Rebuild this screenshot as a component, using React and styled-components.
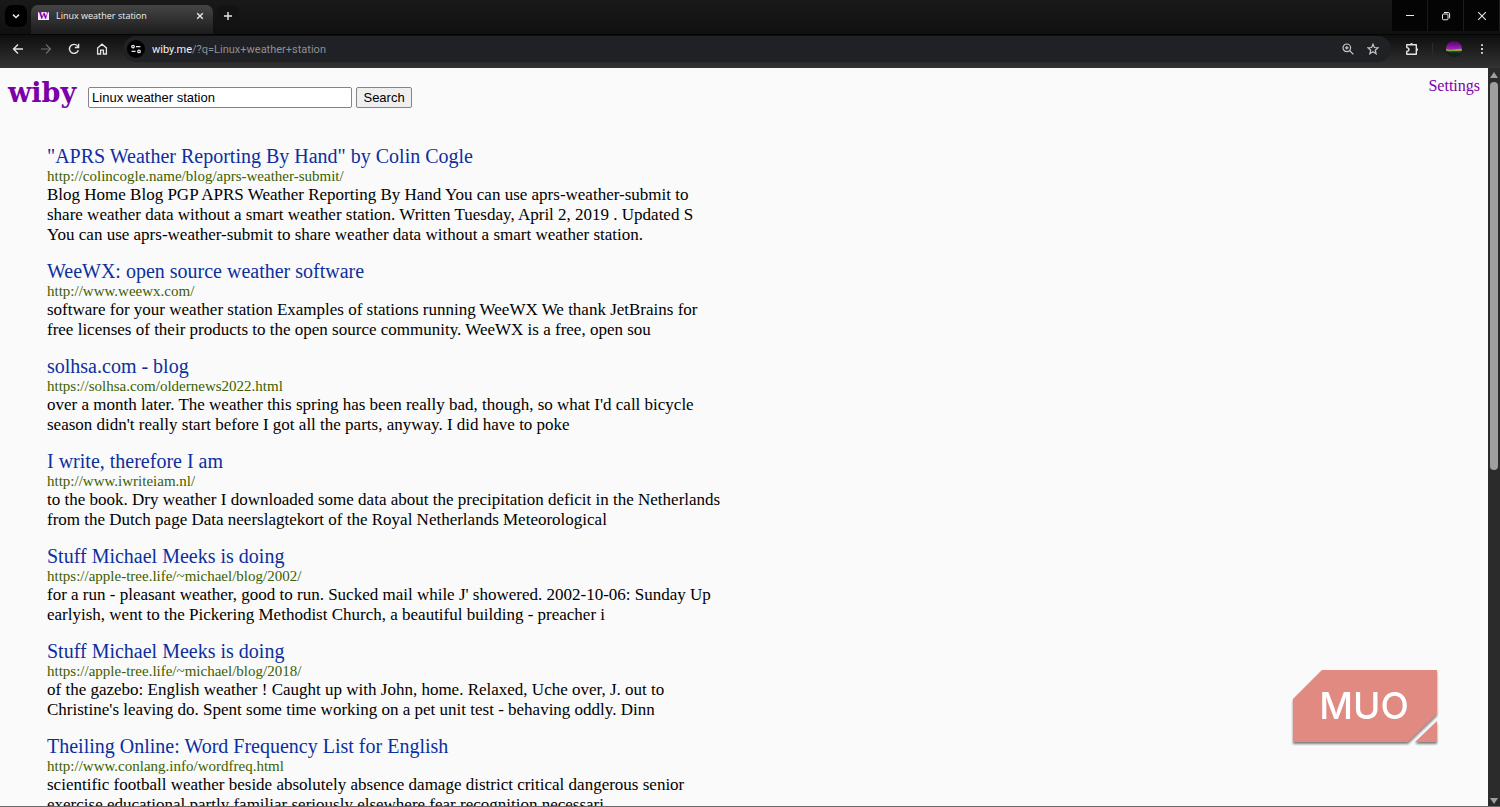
import { useState } from "react";
import styled, { createGlobalStyle } from "styled-components";

const results = [
  {
    title: '"APRS Weather Reporting By Hand" by Colin Cogle',
    url: "http://colincogle.name/blog/aprs-weather-submit/",
    lines: [
      "Blog Home Blog PGP APRS Weather Reporting By Hand You can use aprs-weather-submit to",
      "share weather data without a smart weather station. Written Tuesday, April 2, 2019 . Updated S",
      "You can use aprs-weather-submit to share weather data without a smart weather station.",
    ],
  },
  {
    title: "WeeWX: open source weather software",
    url: "http://www.weewx.com/",
    lines: [
      "software for your weather station Examples of stations running WeeWX We thank JetBrains for",
      "free licenses of their products to the open source community. WeeWX is a free, open sou",
    ],
  },
  {
    title: "solhsa.com - blog",
    url: "https://solhsa.com/oldernews2022.html",
    lines: [
      "over a month later. The weather this spring has been really bad, though, so what I'd call bicycle",
      "season didn't really start before I got all the parts, anyway. I did have to poke",
    ],
  },
  {
    title: "I write, therefore I am",
    url: "http://www.iwriteiam.nl/",
    lines: [
      "to the book. Dry weather I downloaded some data about the precipitation deficit in the Netherlands",
      "from the Dutch page Data neerslagtekort of the Royal Netherlands Meteorological",
    ],
  },
  {
    title: "Stuff Michael Meeks is doing",
    url: "https://apple-tree.life/~michael/blog/2002/",
    lines: [
      "for a run - pleasant weather, good to run. Sucked mail while J' showered. 2002-10-06: Sunday Up",
      "earlyish, went to the Pickering Methodist Church, a beautiful building - preacher i",
    ],
  },
  {
    title: "Stuff Michael Meeks is doing",
    url: "https://apple-tree.life/~michael/blog/2018/",
    lines: [
      "of the gazebo: English weather ! Caught up with John, home. Relaxed, Uche over, J. out to",
      "Christine's leaving do. Spent some time working on a pet unit test - behaving oddly. Dinn",
    ],
  },
  {
    title: "Theiling Online: Word Frequency List for English",
    url: "http://www.conlang.info/wordfreq.html",
    lines: [
      "scientific football weather beside absolutely absence damage district critical dangerous senior",
      "exercise educational partly familiar seriously elsewhere fear recognition necessari",
    ],
  },
];

const Icon = ({ size = 12, children }) => (
  <svg
    width={size}
    height={size}
    viewBox="0 0 12 12"
    fill="none"
    stroke="currentColor"
    strokeWidth="1.2"
    aria-hidden="true"
  >
    {children}
  </svg>
);

const TabStrip = () => (
  <Strip>
    <TabSearch aria-label="Search tabs">
      <Icon>
        <path d="M3 4.6 6 7.5 9 4.6" strokeWidth="1.5" />
      </Icon>
    </TabSearch>
    <Tab>
      <Favicon>W</Favicon>
      <TabTitle>Linux weather station</TabTitle>
      <TabButton aria-label="Close tab">
        <Icon>
          <path d="M3.2 3.2 8.8 8.8 M8.8 3.2 3.2 8.8" strokeWidth="1.4" />
        </Icon>
      </TabButton>
    </Tab>
    <NewTab aria-label="New tab">
      <Icon>
        <path d="M6 2V10 M2 6H10" strokeWidth="1.4" />
      </Icon>
    </NewTab>
    <WindowControls>
      <WindowButton aria-label="Minimize">
        <Icon>
          <path d="M2 5.5H10" strokeWidth="1" />
        </Icon>
      </WindowButton>
      <WindowButton aria-label="Restore">
        <Icon>
          <rect x="2.5" y="4" width="5.5" height="5.8" rx="1" strokeWidth="1" />
          <path d="M4 2.5H8.2Q9.6 2.5 9.6 4V8.3" strokeWidth="1" />
        </Icon>
      </WindowButton>
      <WindowButton aria-label="Close">
        <Icon>
          <path d="M2.2 2.2 9.8 9.8 M9.8 2.2 2.2 9.8" strokeWidth="1.1" />
        </Icon>
      </WindowButton>
    </WindowControls>
  </Strip>
);

const Toolbar = () => (
  <Bar>
    <ToolButton aria-label="Back">
      <Icon>
        <path d="M11 6H1.8 M6 1.5 1.5 6 6 10.5" strokeWidth="1.4" />
      </Icon>
    </ToolButton>
    <ToolButton aria-label="Forward" $dim>
      <Icon>
        <path d="M1 6H10.2 M6 1.5 10.5 6 6 10.5" />
      </Icon>
    </ToolButton>
    <ToolButton aria-label="Reload">
      <Icon>
        <path d="M10.3 7.2A4.5 4.5 0 1 1 9.4 2.9L10.6 4.2" strokeWidth="1.4" />
        <path d="M10.6 0.8V4.5H6.9" strokeWidth="1.4" />
      </Icon>
    </ToolButton>
    <ToolButton aria-label="Home">
      <Icon>
        <path d="M1.6 4.9 6 1.2 10.4 4.9V11H7.4V7.2H4.6V11H1.6Z" strokeWidth="1.3" />
      </Icon>
    </ToolButton>
    <AddressBar>
      <SiteInfo aria-label="View site information">
        <Icon>
          <circle cx="3" cy="3.6" r="1.3" />
          <path d="M6 3.6H10.4 M1.6 8.4H5.6" />
          <circle cx="9" cy="8.4" r="1.3" />
        </Icon>
      </SiteInfo>
      <Address>
        <b>wiby.me</b>/?q=Linux+weather+station
      </Address>
      <ToolButton aria-label="Zoom">
        <Icon>
          <circle cx="4.8" cy="4.8" r="3.8" />
          <path d="M7.5 7.5 11.4 11.4 M3 4.8H6.6 M4.8 3V6.6" />
        </Icon>
      </ToolButton>
      <ToolButton aria-label="Bookmark this tab">
        <Icon>
          <path d="M6 1.2 7.4 4.5 11 4.8 8.3 7.2 9.1 10.7 6 8.8 2.9 10.7 3.7 7.2 1 4.8 4.6 4.5Z" />
        </Icon>
      </ToolButton>
    </AddressBar>
    <ToolButton aria-label="Extensions">
      <Icon size={14}>
        <path
          d="M1.5 2.3H9.7V10.5H1.5V8Q3.4 7.8 3.4 6.4T1.5 4.8Z"
          strokeLinejoin="round"
        />
        <path
          d="M4.3 2.2A1.3 1.3 0 0 1 6.9 2.2Z M9.9 5.1A1.3 1.3 0 0 1 9.9 7.7Z"
          fill="currentColor"
          stroke="none"
        />
      </Icon>
    </ToolButton>
    <Divider />
    <ToolButton aria-label="Profile">
      <svg width="16" height="16" viewBox="0 0 16 16" aria-hidden="true">
        <defs>
          <clipPath id="avatar">
            <circle cx="8" cy="8" r="8" />
          </clipPath>
          <linearGradient id="sky" x1="0" y1="0" x2="0" y2="1">
            <stop offset="0" stopColor="#4d0068" />
            <stop offset="1" stopColor="#b026c8" />
          </linearGradient>
        </defs>
        <g clipPath="url(#avatar)">
          <rect width="16" height="16" fill="#102318" />
          <rect width="16" height="9" fill="url(#sky)" />
          <path d="M0 8Q4 9.2 8 8.4T16 8V10Q8 11 0 10Z" fill="#7fb03c" />
          <path d="M5 10H15V11.5H5Z" fill="#3a3a52" />
        </g>
      </svg>
    </ToolButton>
    <ToolButton aria-label="Menu">
      <Icon>
        <path d="M6 1.2V3 M6 5.1V6.9 M6 9V10.8" strokeWidth="1.8" />
      </Icon>
    </ToolButton>
  </Bar>
);

const Result = ({ title, url, lines }) => (
  <Item>
    <ResultTitle href={url}>{title}</ResultTitle>
    <ResultUrl>{url}</ResultUrl>
    <Snippet>{lines.join("\n")}</Snippet>
  </Item>
);

const Watermark = () => (
  <Badge>
    <svg width="152" height="80" viewBox="0 0 152 80" role="img">
      <g fill="#e08a82">
        <path d="M4 32 33 3H148V47L119 75H4Z" />
        <path d="M148 54V75H126Z" />
      </g>
      <BadgeText x="75" y="52" textAnchor="middle">
        MUO
      </BadgeText>
    </svg>
  </Badge>
);

const App = () => {
  const [query, setQuery] = useState("Linux weather station");

  return (
    <Browser>
      <GlobalStyle />
      <TabStrip />
      <Toolbar />
      <Viewport>
        <Page>
          <Header>
            <Logo href="/">wiby</Logo>
            <SearchForm onSubmit={(e) => e.preventDefault()}>
              <SearchInput
                aria-label="Search"
                value={query}
                onChange={(e) => setQuery(e.target.value)}
              />
              <SearchButton type="submit">Search</SearchButton>
            </SearchForm>
            <Settings href="/settings">Settings</Settings>
          </Header>
          <Results>
            {results.map((result) => (
              <Result key={result.url} {...result} />
            ))}
          </Results>
        </Page>
        <Scrollbar>
          <Arrow $up />
          <Track>
            <Thumb />
          </Track>
          <Arrow />
        </Scrollbar>
      </Viewport>
      <Watermark />
    </Browser>
  );
};

export default App;

const GlobalStyle = createGlobalStyle`
  * {
    box-sizing: border-box;
  }

  body {
    margin: 0;
    background: #fafafa;
  }
`;

const Browser = styled.div`
  position: relative;
  display: flex;
  flex-direction: column;
  height: 100vh;
  overflow: hidden;
  border-bottom: 1px solid #6a6a6a;
`;

const Strip = styled.div`
  display: flex;
  align-items: flex-start;
  flex: none;
  height: 34px;
  padding-left: 5px;
  background: linear-gradient(#191919, #101010);
  font-family: "Open Sans", "Noto Sans", sans-serif;
`;

const IconButton = styled.button`
  display: flex;
  align-items: center;
  justify-content: center;
  flex: none;
  padding: 0;
  border: none;
  background: none;
  color: #e8e8e8;
`;

const TabSearch = styled(IconButton)`
  width: 22px;
  height: 22px;
  margin-top: 5px;
  border-radius: 7px;
  background: #000;
`;

const Tab = styled.div`
  display: flex;
  align-items: center;
  width: 182px;
  height: 29px;
  margin: 5px 0 0 4px;
  padding: 0 6px 7px 7px;
  border-radius: 7px 7px 0 0;
  background: linear-gradient(#454545, #1c1c1c);
`;

const Favicon = styled.span`
  width: 11px;
  height: 8px;
  background: #f4e9f8;
  color: #7a00a8;
  font: bold 10px/8px "Liberation Serif", serif;
  text-align: center;
`;

const TabTitle = styled.span`
  flex: 1;
  margin-left: 7px;
  color: #f0f0f0;
  font-size: 9px;
  line-height: 12px;
  white-space: nowrap;
`;

const TabButton = styled(IconButton)`
  width: 14px;
  height: 14px;
`;

const NewTab = styled(IconButton)`
  width: 22px;
  height: 22px;
  margin: 5px 0 0 4px;
  border-radius: 7px;
  background: #131313;
`;

const WindowControls = styled.div`
  display: flex;
  gap: 1px;
  margin-left: auto;
  padding-right: 1px;
  background: #1c1c1c;
`;

const WindowButton = styled(IconButton)`
  width: 35px;
  height: 31px;
  background: #040404;
`;

const Bar = styled.div`
  display: flex;
  align-items: center;
  flex: none;
  height: 34px;
  padding: 0 4px 5px;
  border-top: 1px solid #050505;
  background: linear-gradient(#0e0e0e, #333);
`;

const ToolButton = styled(IconButton)`
  width: 28px;
  height: 26px;
  color: ${({ $dim }) => ($dim ? "#6c6c6c" : "#e4e4e4")};
`;

const AddressBar = styled.div`
  display: flex;
  align-items: center;
  flex: 1;
  height: 26px;
  margin: 0 7px;
  padding: 0 6px 0 4px;
  border-radius: 13px;
  background: #202124;

  ${ToolButton} {
    width: 25px;
    color: #c7c7c7;
  }
`;

const SiteInfo = styled(IconButton)`
  width: 18px;
  height: 18px;
  border-radius: 50%;
  background: #000;
`;

const Address = styled.span`
  flex: 1;
  margin-left: 7px;
  padding-top: 2px;
  color: #8f9092;
  font-family: Roboto, "Open Sans", sans-serif;
  font-size: 11px;
  line-height: 16px;

  b {
    color: #f2f2f2;
    font-weight: 400;
  }
`;

const Divider = styled.span`
  width: 1px;
  height: 12px;
  margin: 0 7px 0 6px;
  background: #2c2c2c;
`;

const Viewport = styled.div`
  display: flex;
  flex: 1;
  min-height: 0;
`;

const Page = styled.main`
  flex: 1;
  min-width: 0;
  overflow: hidden;
  background: #fafafa;
  color: #000;
  font-family: "Liberation Serif", "Times New Roman", serif;
`;

const Header = styled.header`
  display: flex;
  align-items: flex-start;
  padding: 8px 8px 0;
`;

const Logo = styled.a`
  color: #7a00a8;
  font-family: "DejaVu Serif", serif;
  font-size: 27px;
  font-weight: bold;
  line-height: 34px;
  text-decoration: none;
`;

const SearchForm = styled.form`
  display: flex;
  gap: 4px;
  margin: 11px 0 0 12px;
`;

const SearchInput = styled.input`
  width: 264px;
  height: 21px;
  padding: 0 3px;
  border: 1px solid #858585;
  border-radius: 2px;
  background: #fff;
  color: #000;
  font: 13px "Liberation Sans", Arial, sans-serif;
`;

const SearchButton = styled.button`
  width: 56px;
  height: 21px;
  padding: 0;
  border: 1px solid #858585;
  border-radius: 2px;
  background: #efefef;
  color: #000;
  font: 13px "Liberation Sans", Arial, sans-serif;
`;

const Settings = styled.a`
  margin-left: auto;
  color: #7a00a8;
  font-size: 16px;
  line-height: 20px;
  text-decoration: none;
`;

const Results = styled.section`
  padding: 34px 47px 0;
`;

const Item = styled.article`
  margin-bottom: 14px;
`;

const ResultTitle = styled.a`
  display: block;
  color: #0c2f9f;
  font-size: 20px;
  line-height: 24px;
  text-decoration: none;
`;

const ResultUrl = styled.div`
  color: #3c5e00;
  font-size: 15px;
  line-height: 17px;
`;

const Snippet = styled.p`
  margin: 0;
  font-size: 17px;
  line-height: 20px;
  white-space: pre-line;
`;

const Scrollbar = styled.div`
  display: flex;
  flex-direction: column;
  align-items: center;
  flex: none;
  width: 12px;
  padding: 4px 0 2px;
  background: #2b2b2b;
`;

const Arrow = styled.span`
  border: 4px solid transparent;
  ${({ $up }) => ($up ? "border-top: 0;" : "border-bottom: 0;")}
  ${({ $up }) => ($up ? "border-bottom" : "border-top")}: 6px solid #9f9f9f;
`;

const Track = styled.div`
  flex: 1;
  width: 8px;
  padding: 4px 0;
`;

const Thumb = styled.div`
  height: calc(100% * 6 / 11);
  border-radius: 4px;
  background: #9f9f9f;
`;

const Badge = styled.div`
  position: absolute;
  right: 59px;
  bottom: 59px;

  svg {
    display: block;
    filter: drop-shadow(0 2px 1px rgba(0, 0, 0, 0.5));
  }
`;

const BadgeText = styled.text`
  fill: #fff;
  font-family: Inter, "Open Sans", sans-serif;
  font-size: 37px;
  font-weight: 500;
`;
